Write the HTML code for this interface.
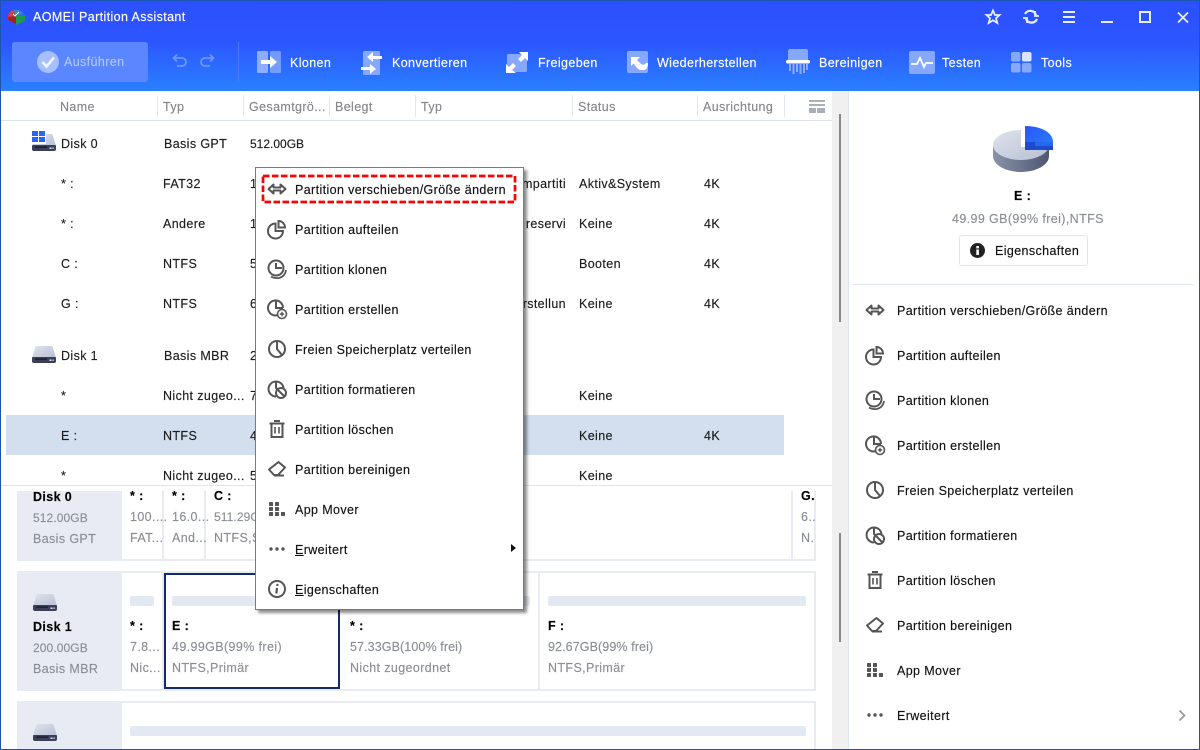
<!DOCTYPE html>
<html lang="de"><head><meta charset="utf-8"><title>AOMEI Partition Assistant</title>
<style>
html,body{margin:0;padding:0;background:#fff}
#w{position:relative;width:1200px;height:750px;overflow:hidden;background:#fff;font-family:"Liberation Sans",sans-serif;font-size:12.5px;letter-spacing:.38px;color:#1c1c1c;-webkit-text-stroke:.15px currentColor}
.t{position:absolute;white-space:nowrap;line-height:16px;margin-top:-8px}
.a{position:absolute}
.g{color:#8b8e96}
.h{color:#85878c}
.b{font-weight:bold;color:#000}
.wh{color:#fff}
.m{color:#111}
.n{font-size:12px;letter-spacing:0}
svg{position:absolute;overflow:visible}
u{text-decoration:underline}
</style></head><body>
<div id="w">
<svg width="0" height="0" style="position:absolute">
<defs>
<linearGradient id="dg" x1="0" y1="0" x2="1" y2="1"><stop offset="0" stop-color="#dfe3ee"/><stop offset="1" stop-color="#b7bfd3"/></linearGradient>
<linearGradient id="sd" x1="0" y1="0" x2="1" y2="0"><stop offset="0" stop-color="#8b93ab"/><stop offset="1" stop-color="#4f5670"/></linearGradient>
<linearGradient id="bl" x1="0" y1="0" x2="1" y2="1"><stop offset="0" stop-color="#2b55f5"/><stop offset="1" stop-color="#2a80ff"/></linearGradient>
<g id="disk"><path d="M5 0H19Q20.500 0 21 2L24 12H0L3 2Q3.500 0 5 0Z" fill="url(#dg)"/><path d="M1 11H23Q24 11 24 12V15Q24 17 22 17H2Q0 17 0 15V12Q0 11 1 11Z" fill="#3a4058"/><rect x="3" y="12.500" width="12" height="1.200" fill="#12162a"/><rect x="17.500" y="13.500" width="2" height="1.500" fill="#dfe3ee"/><rect x="20.500" y="13.500" width="1.200" height="1.500" fill="#dfe3ee"/></g>
<g id="i-move" fill="none" stroke="#555" stroke-width="2" stroke-linejoin="round"><path d="M1.500 10L6.500 5.500V8.500H13.500V5.500L18.500 10L13.500 14.500V11.500H6.500V14.500Z"/></g>
<g id="i-split" fill="none" stroke="#555" stroke-width="2"><path d="M8.500 4.500A7.500 7.500 0 1 0 16 12H8.500Z"/><path d="M11.500 2A6.500 6.500 0 0 1 18 8.500H11.500Z"/></g>
<g id="i-clone" fill="none" stroke="#555" stroke-width="2"><circle cx="9" cy="9" r="7.500"/><path d="M9 4V9H15"/><path d="M4 17.500Q7 19.500 12 19Q18 17.500 19 11" stroke-width="1.700"/></g>
<g id="i-create" fill="none" stroke="#555" stroke-width="2"><path d="M11 16A7.500 7.500 0 1 1 16 9"/><path d="M9 2V9H16"/><circle cx="15" cy="15" r="4.500" stroke-width="1.600"/><path d="M12.800 15H17.200M15 12.800V17.200" stroke-width="1.400"/></g>
<g id="i-free" fill="none" stroke="#555" stroke-width="2"><circle cx="10" cy="10" r="8"/><path d="M10 3V10L15 16"/></g>
<g id="i-format" fill="none" stroke="#555" stroke-width="2"><path d="M9 17.500A7.500 7.500 0 1 1 16.500 9"/><path d="M9 2V9L11 11"/><circle cx="14" cy="14" r="5"/><path d="M10.500 10.500L17.500 17.500"/></g>
<g id="i-del" fill="none" stroke="#555" stroke-width="2"><path d="M2.500 4.500H17.500M7 2H13"/><path d="M4.500 5V18H15.500V5"/><path d="M8 8V14.500M12 8V14.500" stroke-width="1.600"/></g>
<g id="i-erase" fill="none" stroke="#555" stroke-width="2" stroke-linejoin="round"><path d="M2 10.500L11.500 3L18 8.500L11 16H7Z"/><path d="M7 16.500H17"/></g>
<g id="i-app" fill="#555"><rect x="2" y="3" width="4" height="4" rx=".6"/><rect x="8" y="3" width="4" height="4" rx=".6"/><rect x="2" y="8" width="4" height="4" rx=".6"/><rect x="8" y="8" width="4" height="4" rx=".6"/><rect x="2" y="13" width="4" height="4" rx=".6"/><rect x="8" y="13" width="4" height="4" rx=".6"/><rect x="14" y="13" width="4" height="4" rx=".6"/></g>
<g id="i-more" fill="#555"><circle cx="4" cy="10" r="1.700"/><circle cx="10" cy="10" r="1.700"/><circle cx="16" cy="10" r="1.700"/></g>
<g id="i-info" fill="none" stroke="#555" stroke-width="2"><circle cx="10" cy="10" r="8"/><path d="M10 9L9.300 14.500" stroke-width="2.200"/><circle cx="10.400" cy="6" r="1.200" fill="#555" stroke="none"/></g>
</defs>
</svg>

<!-- header -->
<div class="a" style="left:0;top:0;width:1200px;height:91px;background:linear-gradient(#2c50ff 0,#2c55ff 45%,#2a80ff 100%)"></div>
<svg style="left:7px;top:9px" width="18" height="16" viewBox="0 0 18 16"><path d="M1 7Q2 2 7 1L8 7L1 10Z" fill="#e23b3b"/><path d="M7 1Q13 -.5 17 5L8 7Z" fill="#2b8ac8"/><path d="M8 7L18 6V12L9 16Z" fill="#1d9a4f"/><path d="M1 8L9 7V15L2 12Z" fill="#a52323"/><path d="M6 5L8 7L12 3" stroke="#fff" fill="none"/></svg>
<div class="t wh" style="left:33px;top:17px">AOMEI Partition Assistant</div>

<!-- window controls -->
<svg style="left:985px;top:9px" width="206" height="16" viewBox="0 0 206 16" fill="none" stroke="#e8edff" stroke-width="1.800">
<path d="M8 1.500L10 6H14.500L11 9.200L12.300 14L8 11.300L3.700 14L5 9.200L1.500 6H6Z"/>
<path d="M40 5A6 6 0 0 1 51 6M52 10A6 6 0 0 1 41 10" stroke-width="2.200"/><path d="M50 2V7H54M42 14V9H38" stroke-width="1.800"/>
<path d="M78 3H90M78 8H90M78 13H90" stroke-width="2"/>
<path d="M116 13H128" stroke-width="2"/>
<rect x="155" y="3" width="10" height="10" stroke-width="2"/>
<path d="M193 3.500L203 13.500M203 3.500L193 13.500" stroke-width="1.800"/>
</svg>

<!-- toolbar -->
<div class="a" style="left:12px;top:42px;width:136px;height:40px;border-radius:3px;background:#5a86ff"></div>
<svg style="left:37px;top:51px" width="22" height="22" viewBox="0 0 22 22"><circle cx="11" cy="11" r="11" fill="#a6bfff"/><path d="M5.500 11L9.500 15.500L17 6.500" fill="none" stroke="#f2f5ff" stroke-width="2.600"/></svg>
<div class="t" style="left:64px;top:62px;color:#b0c6ff">Ausführen</div>
<svg style="left:172px;top:53px" width="44" height="16" viewBox="0 0 44 16" fill="none" stroke="#6f96ff" stroke-width="1.800"><path d="M2 5H10A4 4 0 0 1 10 13H5"/><path d="M5 1.500L1.500 5L5 8.500"/><path d="M41 5H33A4 4 0 0 0 33 13H38"/><path d="M38 1.500L41.500 5L38 8.500"/></svg>
<div class="a" style="left:238px;top:42px;width:1px;height:40px;background:#4a78ff"></div>

<svg style="left:257px;top:50px" width="24" height="24" viewBox="0 0 24 24"><rect x="0" y="1" width="11" height="22" rx="1.500" fill="#a0b8ff" opacity=".85"/><rect x="13" y="1" width="11" height="22" rx="1.500" fill="#83a5ff" opacity=".85"/><path d="M4 10H13V6L20 12L13 18V14H4Z" fill="#fff"/></svg>
<div class="t wh" style="left:290px;top:63px">Klonen</div>

<svg style="left:361px;top:50px" width="22" height="26" viewBox="0 0 22 26"><rect x="2" y="1" width="17" height="24" rx="1.500" fill="#86a8ff"/><path d="M20 9V6H11V2L5 7L11 12V9Z" fill="#fff" transform="translate(1 0)"/><path d="M0 17V20H9V24L15 19L9 14V17Z" fill="#fff"/></svg>
<div class="t wh" style="left:392px;top:63px">Konvertieren</div>

<svg style="left:506px;top:51px" width="23" height="23" viewBox="0 0 23 23"><rect x="1" y="3" width="20" height="18" rx="1.500" fill="#86a8ff"/><path d="M13 1H22V10L19 7L15 11L12 8L16 4Z" fill="#fff"/><path d="M10 22H0V13L3 16L7 12L10 15L6 19Z" fill="#fff"/></svg>
<div class="t wh" style="left:538px;top:63px">Freigeben</div>

<svg style="left:627px;top:51px" width="22" height="24" viewBox="0 0 22 24"><rect width="21" height="22" y="0" rx="2" fill="#86a8ff"/><path d="M4 6H13L10 9L14 13Q17 15 19 12H21Q21 20 14 19Q12 19 10 17L6.500 12.500L4 15Z" fill="#fff"/></svg>
<div class="t wh" style="left:657px;top:63px">Wiederherstellen</div>

<svg style="left:786px;top:49px" width="25" height="26" viewBox="0 0 25 26"><path d="M2 12V2Q2 0 4 0H20Q22 0 22 2V12Z" fill="#86a8ff"/><rect x="0" y="11" width="24" height="3.500" rx="1.700" fill="#fff"/><path d="M4 15V22M7.500 15V25M11 15V23M14.500 15V25M18 15V24M21 15V21" stroke="#8bacff" stroke-width="2" fill="none"/></svg>
<div class="t wh" style="left:819px;top:63px">Bereinigen</div>

<svg style="left:909px;top:51px" width="26" height="23" viewBox="0 0 26 23"><rect width="26" height="23" rx="2" fill="#86a8ff"/><path d="M2 13H8L11 7L15 16L17 12H24" fill="none" stroke="#fff" stroke-width="1.800"/></svg>
<div class="t wh" style="left:942px;top:63px">Testen</div>

<svg style="left:1011px;top:52px" width="21" height="21" viewBox="0 0 21 21"><rect width="9.500" height="9.500" rx="2" fill="#86a8ff"/><rect x="11" width="9.500" height="9.500" rx="2" fill="#dbe5ff"/><rect y="11" width="9.500" height="9.500" rx="2" fill="#86a8ff"/><rect x="11" y="11" width="9.500" height="9.500" rx="2" fill="#86a8ff"/></svg>
<div class="t wh" style="left:1041px;top:63px">Tools</div>

<!-- table header -->
<div class="a" style="left:0;top:120px;width:832px;height:1px;background:#dce3ef"></div>
<div class="t h" style="left:60px;top:107px">Name</div>
<div class="t h" style="left:163px;top:107px">Typ</div>
<div class="t h" style="left:249px;top:107px">Gesamtgrö...</div>
<div class="t h" style="left:335px;top:107px">Belegt</div>
<div class="t h" style="left:421px;top:107px">Typ</div>
<div class="t h" style="left:578px;top:107px">Status</div>
<div class="t h" style="left:703px;top:107px">Ausrichtung</div>
<div class="a" style="left:157px;top:95px;width:1px;height:22px;background:#e4e8f0"></div>
<div class="a" style="left:243px;top:95px;width:1px;height:22px;background:#e4e8f0"></div>
<div class="a" style="left:329px;top:95px;width:1px;height:22px;background:#e4e8f0"></div>
<div class="a" style="left:415px;top:95px;width:1px;height:22px;background:#e4e8f0"></div>
<div class="a" style="left:572px;top:95px;width:1px;height:22px;background:#e4e8f0"></div>
<div class="a" style="left:697px;top:95px;width:1px;height:22px;background:#e4e8f0"></div>
<div class="a" style="left:784px;top:95px;width:1px;height:22px;background:#e4e8f0"></div>
<svg style="left:809px;top:100px" width="16" height="13" viewBox="0 0 16 13" fill="#a9afbd"><rect width="16" height="2"/><rect y="4" width="16" height="2"/><rect y="8" width="7" height="5"/><rect x="8" y="8" width="8" height="5"/></svg>

<!-- scroll bars -->
<div class="a" style="left:832px;top:91px;width:16px;height:659px;background:#f0f0f0"></div>
<div class="a" style="left:848px;top:91px;width:1px;height:659px;background:#dfe5f2"></div>
<div class="a" style="left:839px;top:114px;width:2px;height:208px;background:#888"></div>
<div class="a" style="left:839px;top:533px;width:2px;height:109px;background:#888"></div>

<!-- rows -->
<div class="a" style="left:6px;top:415px;width:778px;height:40px;background:#d3dfee"></div>
<svg style="left:32px;top:134px" width="24" height="18"><use href="#disk"/></svg>
<svg style="left:32px;top:131px" width="14" height="12" viewBox="0 0 14 12"><rect x="-1" y="-1" width="15" height="14" fill="#fff"/><rect width="6" height="5" fill="#2b63f5"/><rect x="7" width="6" height="5" fill="#2b63f5"/><rect y="6" width="6" height="5" fill="#2b63f5"/><rect x="7" y="6" width="6" height="5" fill="#2b63f5"/></svg>
<div class="t" style="left:61px;top:144px">Disk 0</div>
<div class="t" style="left:164px;top:144px">Basis GPT</div>
<div class="t n" style="left:250px;top:144px">512.00GB</div>

<div class="t" style="left:61px;top:184px">* :</div><div class="t" style="left:163px;top:184px">FAT32</div><div class="t" style="left:250px;top:184px">100.00MB</div>
<div class="t" style="right:634px;top:184px">GPT,EFI-Systempartiti</div><div class="t" style="left:579px;top:184px">Aktiv&amp;System</div><div class="t" style="left:704px;top:184px">4K</div>

<div class="t" style="left:61px;top:224px">* :</div><div class="t" style="left:163px;top:224px">Andere</div><div class="t" style="left:250px;top:224px">16.00MB</div>
<div class="t" style="right:634px;top:224px">GPT,Microsoft reservi</div><div class="t" style="left:579px;top:224px">Keine</div><div class="t" style="left:704px;top:224px">4K</div>

<div class="t" style="left:61px;top:264px">C :</div><div class="t" style="left:163px;top:264px">NTFS</div><div class="t" style="left:250px;top:264px">511.29GB</div>
<div class="t" style="left:579px;top:264px">Booten</div><div class="t" style="left:704px;top:264px">4K</div>

<div class="t" style="left:61px;top:304px">G :</div><div class="t" style="left:163px;top:304px">NTFS</div><div class="t" style="left:250px;top:304px">600.00MB</div>
<div class="t" style="right:634px;top:304px">GPT,Wiederherstellun</div><div class="t" style="left:579px;top:304px">Keine</div><div class="t" style="left:704px;top:304px">4K</div>

<svg style="left:32px;top:346px" width="24" height="18"><use href="#disk"/></svg>
<div class="t" style="left:61px;top:356px">Disk 1</div><div class="t" style="left:164px;top:356px">Basis MBR</div><div class="t" style="left:250px;top:356px">200.00GB</div>

<div class="t" style="left:61px;top:396px">*</div><div class="t" style="left:163px;top:396px">Nicht zugeo...</div><div class="t" style="left:250px;top:396px">7.8</div><div class="t" style="left:579px;top:396px">Keine</div>
<div class="t" style="left:61px;top:436px">E :</div><div class="t" style="left:163px;top:436px">NTFS</div><div class="t" style="left:250px;top:436px">49</div><div class="t" style="left:579px;top:436px">Keine</div><div class="t" style="left:704px;top:436px">4K</div>
<div class="t" style="left:61px;top:476px">*</div><div class="t" style="left:163px;top:476px">Nicht zugeo...</div><div class="t" style="left:250px;top:476px">57</div><div class="t" style="left:579px;top:476px">Keine</div>

<!-- disk map -->
<div class="a" style="left:0;top:485px;width:832px;height:6px;background:#fff;overflow:hidden"><div class="a" style="left:0;top:0;width:832px;height:1px;background:#dfe5f0"></div></div>
<div class="a" style="left:0;top:491px;width:832px;height:259px;overflow:hidden">
  <div class="a" style="left:17px;top:-10px;width:799px;height:80px;background:#e8ebf3"></div>
  <div class="a" style="left:122px;top:-10px;width:40px;height:78px;background:#fff"></div>
  <div class="a" style="left:164px;top:-10px;width:40px;height:78px;background:#fff"></div>
  <div class="a" style="left:206px;top:-10px;width:585px;height:78px;background:#fff"></div>
  <div class="a" style="left:793px;top:-10px;width:21px;height:78px;background:#fff"></div>
  <div class="a" style="left:17px;top:80px;width:799px;height:120px;background:#e8ebf3"></div>
  <div class="a" style="left:122px;top:82px;width:40px;height:116px;background:#fff"></div>
  <div class="a" style="left:164px;top:82px;width:176px;height:116px;background:#fff;border:2px solid #14296b;box-sizing:border-box"></div>
  <div class="a" style="left:340px;top:82px;width:198px;height:116px;background:#fff"></div>
  <div class="a" style="left:540px;top:82px;width:274px;height:116px;background:#fff"></div>
  <div class="a" style="left:17px;top:210px;width:799px;height:60px;background:#e8ebf3"></div>
  <div class="a" style="left:122px;top:212px;width:692px;height:60px;background:#fff"></div>
  <div class="a" style="left:130px;top:105px;width:24px;height:10px;border-radius:2px;background:#e3e9f3"></div>
  <div class="a" style="left:172px;top:105px;width:160px;height:10px;border-radius:2px;background:#e3e9f3"></div>
  <div class="a" style="left:350px;top:105px;width:180px;height:10px;border-radius:2px;background:#e3e9f3"></div>
  <div class="a" style="left:548px;top:105px;width:258px;height:10px;border-radius:2px;background:#e3e9f3"></div>
  <div class="a" style="left:130px;top:235px;width:676px;height:10px;border-radius:2px;background:#e3e9f3"></div>

  <div class="t b" style="left:33px;top:6px">Disk 0</div>
  <div class="t g n" style="left:33px;top:27px;letter-spacing:.1px">512.00GB</div>
  <div class="t g" style="left:33px;top:48px">Basis GPT</div>
  <div class="t b" style="left:130px;top:5px">* :</div><div class="t g" style="left:130px;top:26px">100....</div><div class="t g" style="left:130px;top:47px">FAT...</div>
  <div class="t b" style="left:172px;top:5px">* :</div><div class="t g" style="left:172px;top:26px">16.0...</div><div class="t g" style="left:172px;top:47px">And...</div>
  <div class="t b" style="left:214px;top:5px">C :</div><div class="t g n" style="left:214px;top:26px;letter-spacing:.1px">511.29GB</div><div class="t g" style="left:214px;top:47px">NTFS,System</div>
  <div class="t b" style="left:801px;top:5px">G.</div><div class="t g" style="left:801px;top:26px">6..</div><div class="t g" style="left:801px;top:47px">N.</div>

  <svg style="left:33px;top:103px" width="24" height="18"><use href="#disk"/></svg>
  <div class="t b" style="left:33px;top:136px">Disk 1</div>
  <div class="t g n" style="left:33px;top:157px;letter-spacing:.1px">200.00GB</div>
  <div class="t g" style="left:33px;top:178px">Basis MBR</div>
  <div class="t b" style="left:130px;top:135px">* :</div><div class="t g" style="left:130px;top:156px">7.8...</div><div class="t g" style="left:130px;top:177px">Nic...</div>
  <div class="t b" style="left:172px;top:135px">E :</div><div class="t g" style="left:172px;top:156px">49.99GB(99% frei)</div><div class="t g" style="left:172px;top:177px">NTFS,Primär</div>
  <div class="t b" style="left:350px;top:135px">* :</div><div class="t g" style="left:350px;top:156px;letter-spacing:.1px">57.33GB(100% frei)</div><div class="t g" style="left:350px;top:177px">Nicht zugeordnet</div>
  <div class="t b" style="left:548px;top:135px">F :</div><div class="t g" style="left:548px;top:156px;letter-spacing:.1px">92.67GB(99% frei)</div><div class="t g" style="left:548px;top:177px">NTFS,Primär</div>
  <svg style="left:33px;top:233px" width="24" height="18"><use href="#disk"/></svg>
</div>

<!-- right panel -->
<svg style="left:990px;top:124px" width="66" height="52" viewBox="0 0 66 52">
<path d="M3 21V32C3 41 16 48 31 48C46 48 59 41 59 32V21Z" fill="url(#sd)"/>
<ellipse cx="31" cy="21" rx="28" ry="15" fill="url(#dg)"/>
<rect x="31" y="2" width="4" height="21" fill="#fff"/>
<path d="M35 2C50 2 63 8 63 18V26H35Z" fill="url(#bl)"/>
<path d="M35 18H63V26H35Z" fill="#1f49cf"/>
<path d="M45 18H63V22H45Z" fill="#2a78f8" opacity=".7"/>
</svg>
<div class="t b" style="left:1014px;top:196px">E :</div>
<div class="t g" style="left:952px;top:219px">49.99 GB(99% frei),NTFS</div>
<div class="a" style="left:959px;top:235px;width:127px;height:29px;border:1px solid #e2e5ec;border-radius:3px"></div>
<svg style="left:970px;top:243px" width="15" height="15" viewBox="0 0 15 15"><circle cx="7.500" cy="7.500" r="7.500" fill="#222"/><rect x="6.300" y="6.500" width="2.600" height="5.500" fill="#fff"/><rect x="6.300" y="3" width="2.600" height="2.400" fill="#fff"/></svg>
<div class="t m" style="left:995px;top:251px">Eigenschaften</div>
<div class="a" style="left:853px;top:284px;width:341px;height:1px;background:#dfe5f2"></div>

<svg style="left:865px;top:300px" width="20" height="20"><use href="#i-move"/></svg>
<svg style="left:865px;top:345px" width="20" height="20"><use href="#i-split"/></svg>
<svg style="left:865px;top:390px" width="20" height="20"><use href="#i-clone"/></svg>
<svg style="left:865px;top:435px" width="20" height="20"><use href="#i-create"/></svg>
<svg style="left:865px;top:480px" width="20" height="20"><use href="#i-free"/></svg>
<svg style="left:865px;top:525px" width="20" height="20"><use href="#i-format"/></svg>
<svg style="left:865px;top:570px" width="20" height="20"><use href="#i-del"/></svg>
<svg style="left:865px;top:615px" width="20" height="20"><use href="#i-erase"/></svg>
<svg style="left:865px;top:660px" width="20" height="20"><use href="#i-app"/></svg>
<svg style="left:865px;top:705px" width="20" height="20"><use href="#i-more"/></svg>
<div class="t m" style="left:897px;top:311px">Partition verschieben/Größe ändern</div>
<div class="t m" style="left:897px;top:356px">Partition aufteilen</div>
<div class="t m" style="left:897px;top:401px">Partition klonen</div>
<div class="t m" style="left:897px;top:446px">Partition erstellen</div>
<div class="t m" style="left:897px;top:491px">Freien Speicherplatz verteilen</div>
<div class="t m" style="left:897px;top:536px">Partition formatieren</div>
<div class="t m" style="left:897px;top:581px">Partition löschen</div>
<div class="t m" style="left:897px;top:626px">Partition bereinigen</div>
<div class="t m" style="left:897px;top:671px">App Mover</div>
<div class="t m" style="left:897px;top:716px">Erweitert</div>
<svg style="left:1178px;top:709px" width="8" height="13" viewBox="0 0 8 13"><path d="M1.500 1.500L6.500 6.500L1.500 11.500" fill="none" stroke="#9a9a9a" stroke-width="1.800"/></svg>

<!-- context menu -->
<div class="a" style="left:255px;top:167px;width:267px;height:441px;background:#fff;border:1px solid #7a7a7a;box-shadow:3px 3px 3px rgba(0,0,0,.45)"></div>
<svg style="left:261px;top:174px" width="256" height="30" viewBox="0 0 256 30"><rect x="2" y="2" width="252" height="26" fill="none" stroke="#f00" stroke-width="2.700" stroke-dasharray="6.500 2.500"/></svg>
<svg style="left:267px;top:179px" width="20" height="20"><use href="#i-move"/></svg>
<svg style="left:267px;top:219px" width="20" height="20"><use href="#i-split"/></svg>
<svg style="left:267px;top:259px" width="20" height="20"><use href="#i-clone"/></svg>
<svg style="left:267px;top:299px" width="20" height="20"><use href="#i-create"/></svg>
<svg style="left:267px;top:339px" width="20" height="20"><use href="#i-free"/></svg>
<svg style="left:267px;top:379px" width="20" height="20"><use href="#i-format"/></svg>
<svg style="left:267px;top:419px" width="20" height="20"><use href="#i-del"/></svg>
<svg style="left:267px;top:459px" width="20" height="20"><use href="#i-erase"/></svg>
<svg style="left:267px;top:499px" width="20" height="20"><use href="#i-app"/></svg>
<svg style="left:267px;top:539px" width="20" height="20"><use href="#i-more"/></svg>
<svg style="left:267px;top:579px" width="20" height="20"><use href="#i-info"/></svg>
<div class="t m" style="left:295px;top:190px">Partition verschieben/Größe ändern</div>
<div class="t m" style="left:295px;top:230px">Partition aufteilen</div>
<div class="t m" style="left:295px;top:270px">Partition klonen</div>
<div class="t m" style="left:295px;top:310px">Partition erstellen</div>
<div class="t m" style="left:295px;top:350px">Freien Speicherplatz verteilen</div>
<div class="t m" style="left:295px;top:390px">Partition formatieren</div>
<div class="t m" style="left:295px;top:430px">Partition löschen</div>
<div class="t m" style="left:295px;top:470px">Partition bereinigen</div>
<div class="t m" style="left:295px;top:510px">App Mover</div>
<div class="t m" style="left:295px;top:550px"><u>E</u>rweitert</div>
<div class="t m" style="left:295px;top:590px"><u>E</u>igenschaften</div>
<svg style="left:511px;top:544px" width="5" height="8" viewBox="0 0 5 8"><path d="M0 0L5 4L0 8Z" fill="#111"/></svg>

<!-- window frame -->
<div class="a" style="left:0;top:0;width:1200px;height:1px;background:#1a56b0"></div>
<div class="a" style="left:0;top:0;width:1px;height:750px;background:#1a56b0"></div>
<div class="a" style="right:0;top:0;width:1px;height:750px;background:#1a56b0"></div>
<div class="a" style="left:0;bottom:0;width:1200px;height:1px;background:#1a56b0"></div>
</div>
</body></html>
